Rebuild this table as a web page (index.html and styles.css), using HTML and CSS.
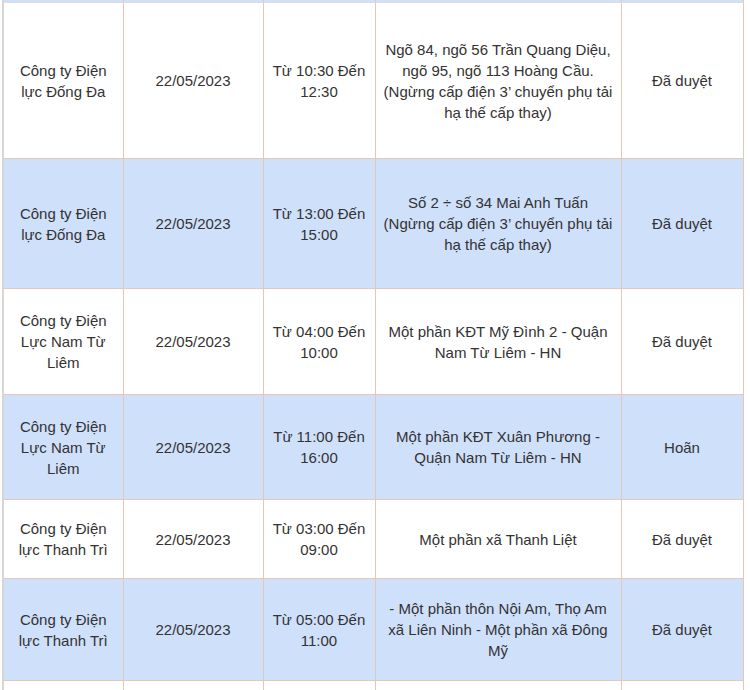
FILE: index.html
```html
<!DOCTYPE html>
<html lang="vi">
<head>
<meta charset="utf-8">
<title>Lịch cắt điện</title>
<link rel="stylesheet" href="styles.css">
</head>
<body>
<table class="schedule">
  <colgroup>
    <col class="c-unit">
    <col class="c-date">
    <col class="c-time">
    <col class="c-area">
    <col class="c-status">
  </colgroup>
  <tbody>
    <tr class="row-alt row-stub"><td></td><td></td><td></td><td></td><td></td></tr>
    <tr class="row-h1">
      <td>Công ty Điện lực Đống Đa</td>
      <td>22/05/2023</td>
      <td>Từ 10:30 Đến 12:30</td>
      <td>Ngõ 84, ngõ 56 Trần Quang Diệu, ngõ 95, ngõ 113 Hoàng Cầu.<br>(Ngừng cấp điện 3’ chuyển phụ tải hạ thế cấp thay)</td>
      <td>Đã duyệt</td>
    </tr>
    <tr class="row-alt row-h2">
      <td>Công ty Điện lực Đống Đa</td>
      <td>22/05/2023</td>
      <td>Từ 13:00 Đến 15:00</td>
      <td>Số 2 ÷ số 34 Mai Anh Tuấn<br>(Ngừng cấp điện 3’ chuyển phụ tải hạ thế cấp thay)</td>
      <td>Đã duyệt</td>
    </tr>
    <tr class="row-h3">
      <td>Công ty Điện Lực Nam Từ Liêm</td>
      <td>22/05/2023</td>
      <td>Từ 04:00 Đến 10:00</td>
      <td>Một phần KĐT Mỹ Đình 2 - Quận Nam Từ Liêm - HN</td>
      <td>Đã duyệt</td>
    </tr>
    <tr class="row-alt row-h4">
      <td>Công ty Điện Lực Nam Từ Liêm</td>
      <td>22/05/2023</td>
      <td>Từ 11:00 Đến 16:00</td>
      <td>Một phần KĐT Xuân Phương - Quận Nam Từ Liêm - HN</td>
      <td>Hoãn</td>
    </tr>
    <tr class="row-h5">
      <td>Công ty Điện lực Thanh Trì</td>
      <td>22/05/2023</td>
      <td>Từ 03:00 Đến 09:00</td>
      <td>Một phần xã Thanh Liệt</td>
      <td>Đã duyệt</td>
    </tr>
    <tr class="row-alt row-h6">
      <td>Công ty Điện lực Thanh Trì</td>
      <td>22/05/2023</td>
      <td>Từ 05:00 Đến 11:00</td>
      <td>- Một phần thôn Nội Am, Thọ Am xã Liên Ninh - Một phần xã Đông Mỹ</td>
      <td>Đã duyệt</td>
    </tr>
    <tr class="row-h7"><td></td><td></td><td></td><td></td><td></td></tr>
  </tbody>
</table>
</body>
</html>
```

FILE: styles.css
```css
html, body {
  margin: 0;
  padding: 0;
  background: #ffffff;
}

body {
  padding-left: 2px;
  font-family: "Liberation Sans", Arial, sans-serif;
  font-size: 15px;
  line-height: 21px;
  color: #333333;
  overflow: hidden;
}

.schedule {
  width: 740px;
  border-collapse: collapse;
  table-layout: fixed;
}

.c-unit { width: 120px; }
.c-date { width: 140px; }
.c-time { width: 112px; }
.c-area { width: 246px; }
.c-status { width: 122px; }

.schedule td {
  border: 1px solid #e6c6b7;
  padding: 0 7px;
  text-align: center;
  vertical-align: middle;
  background: #ffffff;
}

.schedule td:first-child {
  border-left: 2px solid #d9d6d6;
}

.schedule tr.row-alt td {
  background: #cfe0fb;
}

.schedule .row-stub td {
  height: 2px;
  padding: 0;
  border-top: 0;
  border-bottom-color: #e4dcdc;
}

.row-h1 td { height: 155px; }
.row-h2 td { height: 129px; }
.row-h3 td { height: 105px; }
.row-h4 td { height: 104px; }
.row-h5 td { height: 78px; }
.row-h6 td { height: 101px; }
.row-h7 td { height: 20px; }
```
